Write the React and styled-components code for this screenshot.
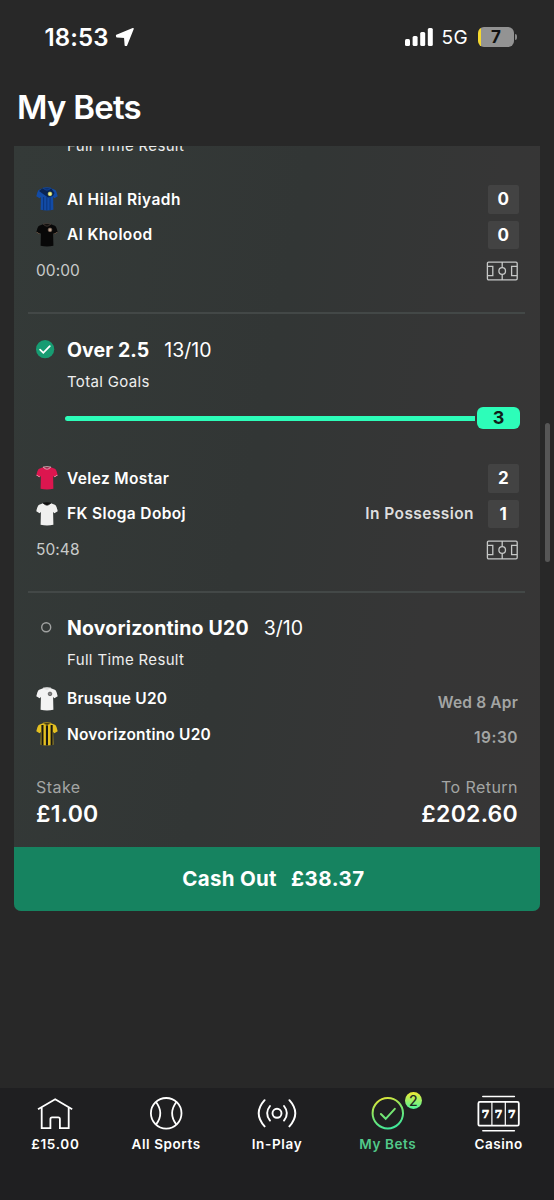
import React from "react";
import styled, { createGlobalStyle } from "styled-components";

const GlobalStyle = createGlobalStyle`
  * {
    box-sizing: border-box;
  }
  body {
    margin: 0;
    background: #282828;
    color: #fff;
    font-family: Inter, "Liberation Sans", sans-serif;
  }
`;

const Screen = styled.div`
  position: relative;
  display: flex;
  flex-direction: column;
  width: 554px;
  height: 1200px;
  overflow: hidden;
  background: #282828;
`;

const StatusBar = styled.div`
  display: flex;
  align-items: center;
  justify-content: space-between;
  height: 74px;
  padding: 0 37px 0 44.5px;
`;
const Clock = styled.div`
  display: flex;
  align-items: center;
  gap: 6px;
  font-size: 24px;
  font-weight: 600;
  letter-spacing: 0.1px;
`;
const StatusIcons = styled.div`
  display: flex;
  align-items: center;
`;
const Network = styled.span`
  margin: 1px 10px 0 8px;
  font-size: 19px;
  letter-spacing: 0.4px;
`;
const Battery = styled.div`
  display: flex;
  align-items: center;
  justify-content: center;
  width: 36px;
  height: 20px;
  border-radius: 6px;
  background: linear-gradient(90deg, #f5d82e 2.5px, #939393 2.5px);
  color: #111;
  font-size: 17px;
  font-weight: 700;
`;
const BatteryTip = styled.div`
  width: 2px;
  height: 6px;
  margin-left: 1px;
  border-radius: 0 3px 3px 0;
  background: #8a8a8a;
`;

const Title = styled.h1`
  height: 66px;
  margin: 0 0 6px;
  padding-left: 17px;
  font-size: 33px;
  font-weight: 600;
  line-height: 66px;
  letter-spacing: -0.75px;
`;

const Scroller = styled.main`
  flex: 1;
  min-height: 0;
  overflow: hidden;
  padding: 0 14px;
`;
const Card = styled.section`
  overflow: hidden;
  border-radius: 0 0 7px 7px;
  background: linear-gradient(100deg, #343a38 0%, #323635 45%, #363636 75%, #373636 100%);
`;
const Leg = styled.article`
  padding: ${(p) => p.$top}px 22px ${(p) => p.$bottom}px;
`;
const CutLeg = styled(Leg)`
  margin-top: -9px;
`;
const Divider = styled.div`
  height: 2px;
  margin: 0 15px 0 14px;
  background: #434847;
`;

const Selection = styled.div`
  display: grid;
  grid-template-columns: 31px 1fr;
  align-items: center;
  height: 32px;
`;
const SelectionName = styled.div`
  font-size: 19.5px;
  font-weight: 700;
  letter-spacing: ${(p) => p.$spacing || 0}px;
`;
const Odds = styled.span`
  margin-left: 15px;
  font-weight: 400;
  letter-spacing: 0;
`;
const Market = styled.div`
  height: ${(p) => p.$height}px;
  padding-left: 31px;
  font-size: 15px;
  line-height: ${(p) => p.$height}px;
  letter-spacing: 0.34px;
  color: #eee;
`;

const Progress = styled.div`
  display: flex;
  align-items: center;
  gap: 2.5px;
  height: 22px;
  margin: 10px -2px 31px 29px;
`;
const Track = styled.div`
  flex: 1;
  height: 5px;
  border-radius: 3px 0 0 3px;
  background: #2dfdb9;
`;
const GoalCount = styled.div`
  width: 43px;
  height: 22px;
  border-radius: 6px;
  background: #2dfdb9;
  color: #101f1a;
  font-size: 18px;
  font-weight: 700;
  line-height: 22px;
  text-align: center;
`;

const Teams = styled.div`
  padding-top: ${(p) => p.$top || 0}px;
`;
const TeamRow = styled.div`
  display: grid;
  grid-template-columns: 31px 1fr auto;
  align-items: center;
  height: 35.5px;
`;
const TeamName = styled.div`
  font-size: 15.5px;
  font-weight: 600;
  letter-spacing: ${(p) => p.$spacing || 0}px;
`;
const TeamInfo = styled.div`
  display: flex;
  align-items: center;
  gap: 14px;
`;
const Possession = styled.span`
  color: #dedede;
  font-size: 15.5px;
  font-weight: 600;
  letter-spacing: 0.42px;
`;
const Score = styled.div`
  width: 30.5px;
  height: 28.5px;
  margin-right: -0.5px;
  border-radius: 2px;
  background: #434343;
  font-size: 17px;
  font-weight: 700;
  line-height: 28.5px;
  text-align: center;
`;
const Kickoff = styled.div`
  padding-top: 6.5px;
  color: #a3a5a4;
  font-size: 15.5px;
  font-weight: 600;
  letter-spacing: ${(p) => p.$spacing || 0}px;
`;
const ClockRow = styled.div`
  display: flex;
  align-items: center;
  justify-content: space-between;
  height: 36px;
  color: #c9cbca;
  font-size: 15.5px;
  letter-spacing: 0.05px;
`;

const Totals = styled.div`
  display: flex;
  justify-content: space-between;
  height: 95px;
  padding: 23px 22px 0;
`;
const Total = styled.div`
  text-align: ${(p) => p.$align || "left"};
`;
const TotalLabel = styled.div`
  color: #a3a5a4;
  font-size: 16px;
  line-height: 24px;
  letter-spacing: 0.45px;
`;
const TotalAmount = styled.div`
  font-size: 23px;
  font-weight: 600;
  line-height: 31px;
  letter-spacing: 0.25px;
`;
const CashOut = styled.button`
  display: flex;
  align-items: center;
  justify-content: center;
  gap: 14px;
  width: 100%;
  height: 64px;
  padding: 0 7px 1px 0;
  border: 0;
  background: #168360;
  color: #fff;
  font-family: inherit;
  font-size: 20.5px;
  font-weight: 700;
  letter-spacing: 0.3px;
`;
const CashOutValue = styled.span`
  letter-spacing: 0.5px;
`;
const ScrollThumb = styled.div`
  position: absolute;
  top: 423px;
  right: 4px;
  width: 5px;
  height: 139px;
  border-radius: 3px;
  background: #565656;
`;

const TabBar = styled.nav`
  display: grid;
  grid-template-columns: repeat(5, 1fr);
  height: 112px;
  padding-top: 4px;
  background: #1f1f21;
`;
const Tab = styled.a`
  display: flex;
  flex-direction: column;
  align-items: center;
  height: 60px;
  color: ${(p) => (p.$active ? "#52c98a" : "#fff")};
  font-size: 13.5px;
  font-weight: 600;
  line-height: 18px;
  letter-spacing: ${(p) => p.$spacing}px;
`;
const TabIcon = styled.div`
  position: relative;
  display: flex;
  height: 42.5px;
`;
const Badge = styled.span`
  position: absolute;
  top: 0;
  left: 35px;
  width: 17px;
  height: 17px;
  border-radius: 50%;
  background: linear-gradient(180deg, #f2ea33, #4df59a);
  color: #1f2b22;
  font-size: 14px;
  font-weight: 500;
  line-height: 17px;
  letter-spacing: 0;
  text-align: center;
`;

const shirtPath =
  "M7 1.2 L2.6 3 Q1.1 4.6 0.3 9.3 L3.6 11.2 L4.9 9.9 L4.6 22.8 Q11 24 17.4 22.8 L17.1 9.9 L18.4 11.2 L21.7 9.3 Q20.9 4.6 19.4 3 L15 1.2 Q11 3.2 7 1.2 Z";

function Shirt({ kit }) {
  const id = `shirt-${kit.id}`;
  return (
    <svg width="22" height="24" viewBox="0 0 22 24">
      <defs>
        <clipPath id={id}>
          <path d={shirtPath} />
        </clipPath>
      </defs>
      <g clipPath={`url(#${id})`}>
        <rect width="22" height="24" fill={kit.color} />
        {kit.yoke && <path d="M3 4 L8 0 L15 1 L18.5 6 L17 9 L12 10.5 Z" fill={kit.yoke} />}
        {(kit.stripes || []).map((x) => (
          <rect key={x} x={x} y={kit.stripeTop} width={kit.stripeWidth} height="24" fill={kit.stripe} />
        ))}
        {kit.trim && (
          <path d="M0.2 9.3 L4 11.5 M21.8 9.3 L18 11.5" stroke={kit.trim} strokeWidth="1.2" />
        )}
      </g>
      {kit.collar && (
        <path d="M7.2 1.1 Q11 0.2 14.8 1.1 Q11 5.2 7.2 1.1 Z" fill={kit.inner} stroke={kit.collar} strokeWidth="0.8" />
      )}
      {kit.crest && <circle cx="14" cy="6.9" r="1.8" fill={kit.crest} stroke={kit.crestEdge} strokeWidth="0.8" />}
    </svg>
  );
}

const kits = {
  hilal: {
    id: "hilal",
    color: "#124ba6",
    yoke: "#0a2452",
    stripe: "#0b3275",
    stripes: [7.2, 10.4, 13.6],
    stripeWidth: 0.9,
    stripeTop: 10,
    collar: "#124ba6",
    inner: "#0b2c68",
    crest: "#f1f19b",
    crestEdge: "#d9dd62",
  },
  kholood: {
    id: "kholood",
    color: "#080808",
    trim: "#8a6f5a",
    collar: "#4a3f38",
    inner: "#080808",
    crest: "#b9a08e",
    crestEdge: "#80695b",
  },
  velez: { id: "velez", color: "#dc164f", trim: "#f0c8d0", collar: "#e8c9cf", inner: "#8b1034" },
  sloga: { id: "sloga", color: "#f0f0ef", collar: "#111", inner: "#111" },
  brusque: {
    id: "brusque",
    color: "#f3f3f3",
    collar: "#f3f3f3",
    inner: "#dcdcdc",
    crest: "#858585",
    crestEdge: "#555",
  },
  novo: {
    id: "novo",
    color: "#e3bf20",
    stripe: "#171713",
    stripes: [5.4, 9.9, 14.6],
    stripeWidth: 2.1,
    stripeTop: 3,
    collar: "#c9a71c",
    inner: "#2a2614",
  },
};

const Pitch = () => (
  <svg width="32" height="20" viewBox="0 0 32 20" fill="none" stroke="#c6c8c7" strokeWidth="1.3">
    <rect x="1.4" y="1.2" width="29.8" height="17.6" rx="1.2" />
    <path d="M1.5 5.3 H6.8 V14.7 H1.5 M31 5.3 H25.6 V14.7 H31 M16.2 1 V6.7 M16.2 13.3 V19" />
    <circle cx="16.2" cy="10" r="3.3" />
  </svg>
);

const WonIcon = () => (
  <svg width="19" height="21" viewBox="0 0 19 21">
    <circle cx="9.1" cy="9.2" r="9.1" fill="#179c72" />
    <path d="M4.1 9.7 L7.3 12.8 L13.8 6.2" fill="none" stroke="#fff" strokeWidth="1.8" strokeLinecap="round" />
  </svg>
);

const PendingIcon = () => (
  <svg width="20" height="20" viewBox="0 0 20 20">
    <circle cx="10.2" cy="9.2" r="4.5" fill="none" stroke="#a0a2a1" strokeWidth="1.4" />
  </svg>
);

const LocationArrow = () => (
  <svg width="20" height="20" viewBox="0 0 20 20">
    <path
      d="M18 1.8 L1.7 8.6 L1.9 9.6 L9.8 10.2 L10.4 18.1 L11.4 18.3 Z"
      fill="#fff"
      stroke="#fff"
      strokeWidth="1.6"
      strokeLinejoin="round"
    />
  </svg>
);

const Signal = () => (
  <svg width="28" height="18" viewBox="0 0 28 18" fill="#fff">
    <rect x="0" y="11" width="5" height="7" rx="1.5" />
    <rect x="7.6" y="8" width="5" height="10" rx="1.5" />
    <rect x="15.2" y="4" width="5" height="14" rx="1.5" />
    <rect x="22.8" y="0" width="5" height="18" rx="1.5" />
  </svg>
);

const HomeIcon = () => (
  <svg width="36" height="43" viewBox="0 0 36 43" fill="none" stroke="#fff" strokeWidth="1.8">
    <path d="M1 17.3 L18.2 7.2 L35.2 17.3" />
    <path d="M4.7 15.5 V36.1 H13.4 V27 Q13.4 25.3 15.1 25.3 H21.2 Q22.9 25.3 22.9 27 V36.1 H31.7 V15.5" />
  </svg>
);

const BallIcon = () => (
  <svg width="34" height="43" viewBox="0 0 34 43" fill="none" stroke="#fff" strokeWidth="1.8">
    <circle cx="17.2" cy="21.3" r="15.3" />
    <path d="M7 10 Q15.6 21.3 7 32.6 M27.4 10 Q18.8 21.3 27.4 32.6" />
  </svg>
);

const InPlayIcon = () => (
  <svg width="40" height="43" viewBox="0 0 40 43" fill="none" stroke="#fff" strokeWidth="1.9" strokeLinecap="round">
    <circle cx="20" cy="21.3" r="4.5" />
    <path d="M13 14 Q7.2 21.3 13 28.6 M27 14 Q32.8 21.3 27 28.6" />
    <path d="M7.6 8.2 Q-4.2 21.3 7.6 34.4 M32.4 8.2 Q44.2 21.3 32.4 34.4" />
  </svg>
);

const MyBetsIcon = () => (
  <svg width="36" height="43" viewBox="0 0 36 43" fill="none" stroke="url(#ring)" strokeWidth="2">
    <defs>
      <linearGradient id="ring" gradientUnits="userSpaceOnUse" x1="9" y1="6" x2="20" y2="37">
        <stop offset="0" stopColor="#e2e636" />
        <stop offset="0.45" stopColor="#7fe66a" />
        <stop offset="1" stopColor="#3fe79c" />
      </linearGradient>
    </defs>
    <circle cx="17.8" cy="21.3" r="15.2" />
    <path d="M10.9 22 L15.7 26.8 L24.8 16.8" strokeLinecap="round" />
  </svg>
);

const CasinoIcon = () => (
  <svg width="44" height="43" viewBox="0 0 44 43" fill="none" stroke="#fff" strokeWidth="1.8">
    <path d="M5.8 4.6 H37.4 M5.8 38.8 H37.4" strokeWidth="1.5" strokeLinecap="round" />
    <rect x="1.4" y="9.9" width="40.4" height="23.8" rx="1.5" />
    <path d="M14.9 10 V34 M28.3 10 V34" strokeWidth="1.2" />
    <g
      fill="#fff"
      stroke="#fff"
      strokeWidth="0.7"
      fontFamily="DejaVu Serif, serif"
      fontWeight="700"
      fontSize="11"
      textAnchor="middle"
      letterSpacing="0"
    >
      <text x="8.5" y="25.7">7</text>
      <text x="21.7" y="25.7">7</text>
      <text x="34.8" y="25.7">7</text>
    </g>
  </svg>
);

const tabs = [
  { label: "£15.00", Icon: HomeIcon, spacing: 0.7 },
  { label: "All Sports", Icon: BallIcon, spacing: 0.58 },
  { label: "In-Play", Icon: InPlayIcon, spacing: 0.65 },
  { label: "My Bets", Icon: MyBetsIcon, spacing: 0.58, active: true, badge: 2 },
  { label: "Casino", Icon: CasinoIcon, spacing: 0.5 },
];

function Team({ kit, name, spacing, children }) {
  return (
    <TeamRow>
      <Shirt kit={kits[kit]} />
      <TeamName $spacing={spacing}>{name}</TeamName>
      <TeamInfo>{children}</TeamInfo>
    </TeamRow>
  );
}

function App() {
  return (
    <Screen>
      <GlobalStyle />
      <StatusBar>
        <Clock>
          18:53
          <LocationArrow />
        </Clock>
        <StatusIcons>
          <Signal />
          <Network>5G</Network>
          <Battery>7</Battery>
          <BatteryTip />
        </StatusIcons>
      </StatusBar>
      <Title>My Bets</Title>

      <Scroller>
        <Card>
          <CutLeg $top={0} $bottom={23.5}>
            <Market $height={18}>Full Time Result</Market>
            <Teams $top={26.5}>
              <Team kit="hilal" name="Al Hilal Riyadh" spacing={0.46}>
                <Score>0</Score>
              </Team>
              <Team kit="kholood" name="Al Kholood" spacing={0.39}>
                <Score>0</Score>
              </Team>
            </Teams>
            <ClockRow>
              00:00
              <Pitch />
            </ClockRow>
          </CutLeg>
          <Divider />

          <Leg $top={20} $bottom={23.5}>
            <Selection>
              <WonIcon />
              <SelectionName $spacing={0.07}>
                Over 2.5<Odds>13/10</Odds>
              </SelectionName>
            </Selection>
            <Market $height={31}>Total Goals</Market>
            <Progress>
              <Track />
              <GoalCount>3</GoalCount>
            </Progress>
            <Teams $top={0.5}>
              <Team kit="velez" name="Velez Mostar" spacing={0.36}>
                <Score>2</Score>
              </Team>
              <Team kit="sloga" name="FK Sloga Doboj" spacing={0.37}>
                <Possession>In Possession</Possession>
                <Score>1</Score>
              </Team>
            </Teams>
            <ClockRow>
              50:48
              <Pitch />
            </ClockRow>
          </Leg>
          <Divider />

          <Leg $top={19} $bottom={0}>
            <Selection>
              <PendingIcon />
              <SelectionName $spacing={0.17}>
                Novorizontino U20<Odds>3/10</Odds>
              </SelectionName>
            </Selection>
            <Market $height={31}>Full Time Result</Market>
            <Teams $top={6}>
              <Team kit="brusque" name="Brusque U20" spacing={0.22}>
                <Kickoff $spacing={0.18}>Wed 8 Apr</Kickoff>
              </Team>
              <Team kit="novo" name="Novorizontino U20" spacing={0.2}>
                <Kickoff $spacing={0.5}>19:30</Kickoff>
              </Team>
            </Teams>
          </Leg>

          <Totals>
            <Total>
              <TotalLabel>Stake</TotalLabel>
              <TotalAmount>£1.00</TotalAmount>
            </Total>
            <Total $align="right">
              <TotalLabel>To Return</TotalLabel>
              <TotalAmount>£202.60</TotalAmount>
            </Total>
          </Totals>
          <CashOut>
            Cash Out <CashOutValue>£38.37</CashOutValue>
          </CashOut>
        </Card>
      </Scroller>
      <ScrollThumb />

      <TabBar>
        {tabs.map(({ label, Icon, spacing, active, badge }) => (
          <Tab key={label} $active={active} $spacing={spacing}>
            <TabIcon>
              <Icon />
              {badge && <Badge>{badge}</Badge>}
            </TabIcon>
            {label}
          </Tab>
        ))}
      </TabBar>
    </Screen>
  );
}

export default App;
